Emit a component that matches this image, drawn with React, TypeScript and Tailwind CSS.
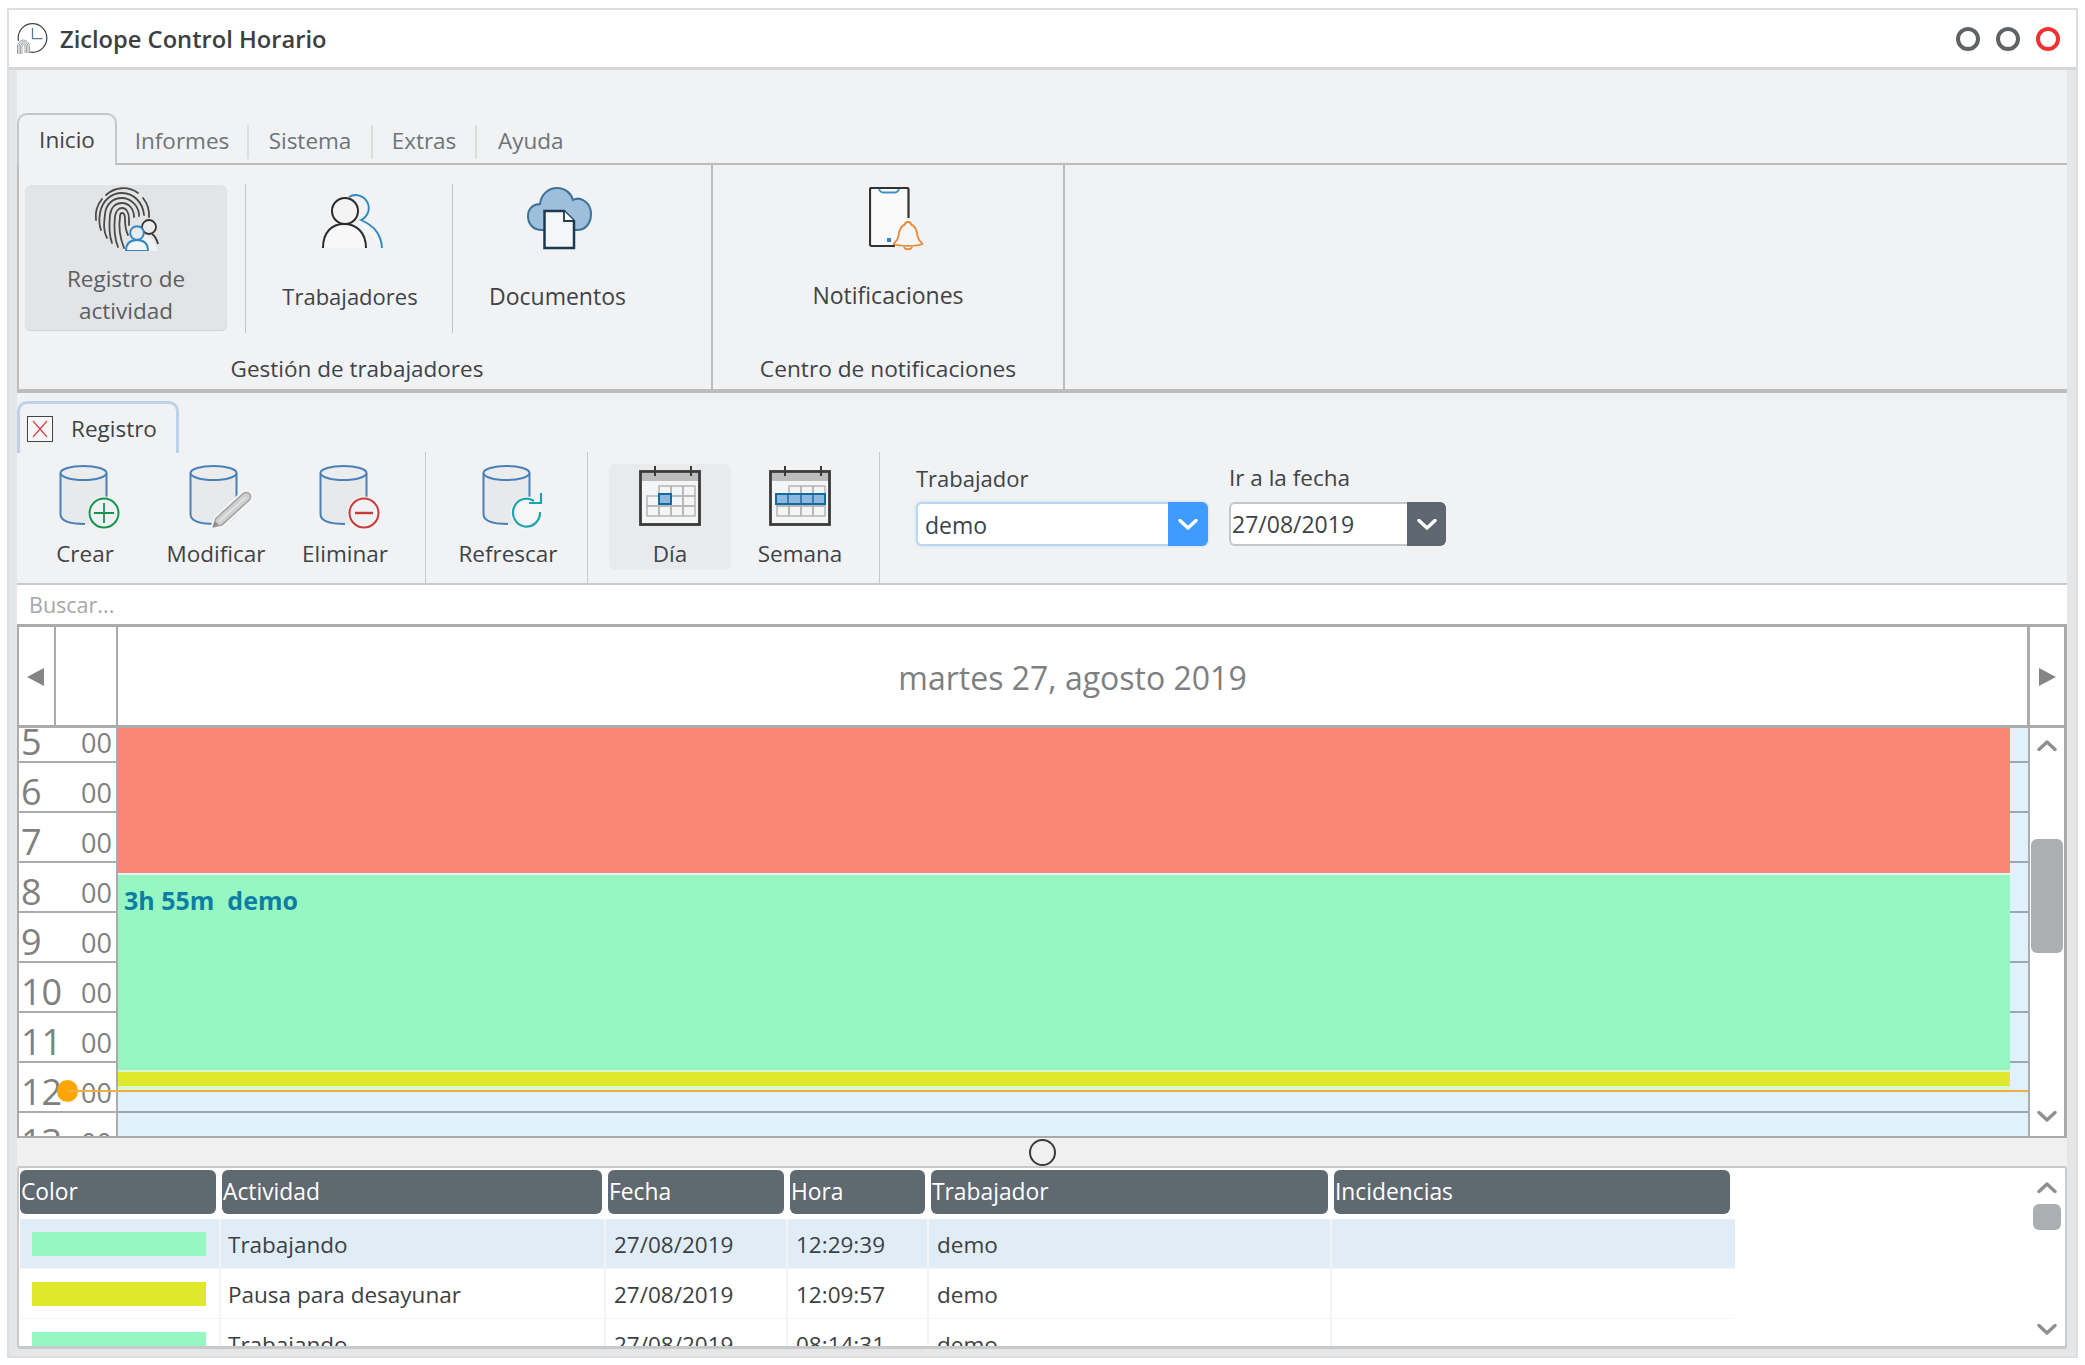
import React from "react";

const Chev = ({ up = false, color = "#8d8f91", w = 20, h = 11, sw = 3.4 }: { up?: boolean; color?: string; w?: number; h?: number; sw?: number }) => (
  <svg width={w} height={h} viewBox="0 0 20 11" className="block">
    <path d={up ? "M2 9.5 L10 2 L18 9.5" : "M2 1.5 L10 9 L18 1.5"} fill="none" stroke={color} strokeWidth={sw} strokeLinecap="round" strokeLinejoin="round" />
  </svg>
);

const Logo = () => (
  <svg width="32" height="32" viewBox="0 0 32 32" className="block">
    <circle cx="15.500" cy="15" r="14.300" fill="none" stroke="#3a4146" strokeWidth="1.200" />
    <path d="M15.500 5 V15.700 H25.500" fill="none" stroke="#55789a" strokeWidth="1.300" />
    <circle cx="6.500" cy="24" r="8" fill="#ffffff" />
    {[1.500, 3, 4.500, 6].map((r) => (
      <path key={r} d={`M${6.5 - r} 31 V${24} A${r} ${r + 1} 0 0 1 ${6.5 + r} 24 V30`} fill="none" stroke="#8a8f92" strokeWidth="0.800" />
    ))}
  </svg>
);

const fpPaths = [
  "M3 33 A26 27 0 0 1 9 12",
  "M13 8 A26 27 0 0 1 45 6",
  "M50 11 A26 27 0 0 1 56 30",
  "M8 43 C6 38 6 32 7 26 C9 14 18 6 29 6 C41 6 50 16 51 28",
  "M14 51 C10 44 11 36 12 27 C13 17 20 11 29 11 C37 11 45 18 46 27 L46 29",
  "M19 56 C16 48 16 38 17 28 C18 20 23 16 29 16 C36 16 41 22 41 30",
  "M25 60 C21 50 21 38 22 29 C23 24 26 21 29 21 C33 21 36 25 36 32 L36 38",
  "M31 61 C26 48 26 36 27 30 C27 27 28 26 29 26 C31 26 32 28 32 32 C32 38 33 44 35 48",
];

const Fingerprint = () => (
  <svg width="66" height="64" viewBox="0 0 66 64" className="block">
    {fpPaths.map((d) => (
      <path key={d} d={d} fill="none" stroke="#4a4a4a" strokeWidth="1.800" strokeLinecap="round" />
    ))}
    <path d="M44 50 C52 46 60 48 65 64 L38 64 Z" fill="#f1f2f3" />
    <circle cx="56" cy="40" r="7" fill="#ececed" stroke="#333" strokeWidth="1.800" />
    <path d="M59 47 C62 49 64 53 65 57" fill="none" stroke="#333" strokeWidth="1.800" />
    <path d="M33 64 C33 56 37 53 44 53 C51 53 55 56 55 64 Z" fill="#f4f5f6" stroke="#2e88c4" strokeWidth="1.900" />
    <circle cx="44" cy="46" r="6.800" fill="#e8ecef" stroke="#2e88c4" strokeWidth="1.900" />
  </svg>
);

const People = () => (
  <svg width="61" height="61" viewBox="0 0 61 61" className="block">
    <path d="M36 33 C47 37 56 44 59.500 58" fill="#f6f6f6" stroke="none" />
    <path d="M27 9 A13 13 0 1 1 39 32 C50 37 59 44 60 60" fill="none" stroke="#2e88c4" strokeWidth="1.900" />
    <path d="M1 60 C1 44 10 36 22 36 C34 36 44 44 44 60" fill="#f8f8f8" stroke="#2b2b2b" strokeWidth="2" />
    <circle cx="23" cy="23" r="13" fill="#f3f3f3" stroke="#2b2b2b" strokeWidth="2" />
  </svg>
);

const CloudDoc = () => (
  <svg width="65" height="63" viewBox="0 0 65 63" className="block">
    <path d="M15 43 C6 43 1 37 1 29 C1 21 7 17 13 17 C14 7 22 1 30 1 C38 1 44 6 46 13 C53 9 64 15 64 27 C64 37 58 43 50 43 Z" fill="#9dbfdc" stroke="#3d7099" strokeWidth="2" />
    <path d="M17.500 24 H37 L47 34 V61 H17.500 Z" fill="#f4f6f8" stroke="#1c3a52" strokeWidth="2.500" />
    <path d="M37 24 V34 H47" fill="#ffffff" stroke="#1c3a52" strokeWidth="1.800" />
  </svg>
);

const PhoneBell = () => (
  <svg width="55" height="64" viewBox="0 0 55 64" className="block">
    <path d="M26 59 H2.500 A1.500 1.500 0 0 1 1 57.500 V2.500 A1.500 1.500 0 0 1 2.500 1 H38 A1.500 1.500 0 0 1 39.500 2.500 V31" fill="#fafafa" stroke="#333" strokeWidth="2.200" />
    <path d="M10 2 C11 5 12 5.500 14 5.500 H26 C28 5.500 29 5 30 2" fill="none" stroke="#3d8fc6" strokeWidth="1.800" />
    <rect x="18" y="51" width="4" height="4" fill="#2e88c4" />
    <path d="M39 35 C41 35 42 36 42 37.500 C47 39 48 44 48.500 49 C49 53 51.500 55 53.500 57 C49 59.500 29 59.500 24.500 57 C26.500 55 29 53 29.500 49 C30 44 31 39 36 37.500 C36 36 37 35 39 35 Z" fill="#f6f6f6" stroke="#e98a3a" strokeWidth="1.900" strokeLinejoin="round" />
    <path d="M35 60 C36 63 42 63 43 60" fill="none" stroke="#e98a3a" strokeWidth="1.800" />
  </svg>
);

const Cylinder = ({ children }: { children?: React.ReactNode }) => (
  <svg width="61" height="65" viewBox="0 0 61 65" className="block overflow-visible">
    <path d="M1.500 9 V52 C1.500 58 9 60 24 60 C36 60 47 58 47.500 52 V9 Z" fill="#e8e9ea" />
    <path d="M1.500 9 V50 C1.500 57 10 60 26 60 M47.500 9 V36" fill="none" stroke="#4a80b8" strokeWidth="2" />
    <ellipse cx="24.500" cy="9" rx="23" ry="7" fill="#ebecee" stroke="#4a80b8" strokeWidth="2" />
    {children}
  </svg>
);

const Plus = () => (
  <g>
    <circle cx="45" cy="49" r="16.500" fill="#f6f6f6" />
    <circle cx="45" cy="49" r="14.500" fill="#f0f1f2" stroke="#16954f" strokeWidth="2" />
    <path d="M45 39 V59 M35 49 H55" stroke="#16954f" strokeWidth="1.800" />
  </g>
);
const Pencil = () => (
  <g>
    <path d="M24 63 L27 54.300 L54 29.700 C56 28 59 28 60.500 30 C62 32 62 34 60 36.300 L33 60.900 Z" fill="#f1f2f3" stroke="#f6f6f6" strokeWidth="5" strokeLinejoin="round" />
    <path d="M24 63 L27 54.300 L54 29.700 C56 28 59 28 60.500 30 C62 32 62 34 60 36.300 L33 60.900 Z" fill="#cfcfcf" stroke="#a2a2a2" strokeWidth="1.500" strokeLinejoin="round" />
    <path d="M30 57.500 L57 33" stroke="#e4e4e4" strokeWidth="1.600" />
    <path d="M24 63 L26 57.500 L29.500 60.500 Z" fill="#8a8a8a" />
  </g>
);
const Minus = () => (
  <g>
    <circle cx="45" cy="49" r="16.500" fill="#f8f8f8" />
    <circle cx="45" cy="49" r="14.500" fill="#f1f2f3" stroke="#c93a3a" strokeWidth="2" />
    <path d="M36 49 H54" stroke="#c93a3a" strokeWidth="2.400" />
  </g>
);
const Refresh = () => (
  <g>
    <circle cx="45" cy="49" r="16.500" fill="#f6f6f6" />
    <path d="M58 48 A13.500 14 0 1 1 52 37" fill="none" stroke="#1fa5b2" strokeWidth="2.200" />
    <path d="M59 29 V39 H47" fill="none" stroke="#1fa5b2" strokeWidth="2.200" />
  </g>
);

const CalendarIcon = ({ week = false }: { week?: boolean }) => {
  const xs = [8, 20, 32, 44];
  const ys = [20, 30, 40];
  return (
    <svg width="62" height="60" viewBox="0 0 62 60" className="block">
      <rect x="1.500" y="5.500" width="59" height="53" fill="#f4f5f6" stroke="#3a3a3a" strokeWidth="2.800" />
      <rect x="3" y="7" width="56" height="8" fill="#bcbcbc" />
      <path d="M16 0 V10 M52 0 V10" stroke="#3a3a3a" strokeWidth="2" />
      {ys.map((y) =>
        xs.map((x) =>
          y === 20 && x === 8 ? null : (
            <rect key={x + "-" + y} x={x} y={y} width="12" height="10" fill="none" stroke="#b5b5b5" strokeWidth="1.500" />
          )
        )
      )}
      {week ? (
        <g>
          <rect x="7" y="28" width="49" height="10" fill="#8db9de" stroke="#146a9e" strokeWidth="2" />
          <path d="M19 28 V38 M32 28 V38 M44 28 V38" stroke="#146a9e" strokeWidth="1.400" />
        </g>
      ) : (
        <rect x="20" y="28" width="12" height="10" fill="#8db9de" stroke="#146a9e" strokeWidth="2" />
      )}
    </svg>
  );
};

const ToolBtn = ({ icon, label, className }: { icon: React.ReactNode; label: string; className: string }) => (
  <div className={`flex flex-col items-center pt-[12px] h-full ${className}`}>
    <div className="h-[75px] flex justify-center">{icon}</div>
    <div className="text-[22.500px] leading-[30px] text-[#3f4346]">{label}</div>
  </div>
);

const Tab = ({ label, className }: { label: string; className: string }) => (
  <div className={`h-[34px] mb-[4px] flex items-center justify-center pb-[3px] border-r-2 border-[#dcdddd] text-[22.500px] text-[#6f7477] ${className}`}>
    {label}
  </div>
);

const hours = [5, 6, 7, 8, 9, 10, 11, 12, 13];

const headerCols = [
  ["Color", "w-[196px]"],
  ["Actividad", "w-[380px]"],
  ["Fecha", "w-[176px]"],
  ["Hora", "w-[135px]"],
  ["Trabajador", "w-[397px]"],
  ["Incidencias", "w-[396px]"],
];

const rows = [
  { c: "bg-[#96f7c3]", a: "Trabajando", f: "27/08/2019", h: "12:29:39", t: "demo", bg: "bg-[#e1edf6]" },
  { c: "bg-[#e0e82e]", a: "Pausa para desayunar", f: "27/08/2019", h: "12:09:57", t: "demo", bg: "bg-white" },
  { c: "bg-[#96f7c3]", a: "Trabajando", f: "27/08/2019", h: "08:14:31", t: "demo", bg: "bg-white" },
];

export default function App() {
  return (
    <div className="w-[2085px] h-[1365px] bg-white pt-[8px] pl-[7px] overflow-hidden font-['Open_Sans','Noto_Sans',sans-serif]">
      <div className="w-[2071px] h-[1350px] flex flex-col border-2 border-[#dcdedf] bg-[#e4e6e8]">
        {/* title bar */}
        <div className="h-[60px] shrink-0 bg-white border-b-[3px] border-[#d5d7d8] flex items-center pl-[8px] pr-[16px]">
          <Logo />
          <div className="ml-[11px] pt-[2px] text-[23.700px] font-semibold text-[#3c4043]">Ziclope Control Horario</div>
          <div className="ml-auto flex gap-[16px]">
            <div className="w-[24px] h-[24px] rounded-full border-[4px] border-[#5f6366]" />
            <div className="w-[24px] h-[24px] rounded-full border-[4px] border-[#5f6366]" />
            <div className="w-[24px] h-[24px] rounded-full border-[4px] border-[#f03232]" />
          </div>
        </div>

        <div className="flex-1 min-h-0 pl-[8px] pr-[9px] pb-[9px] flex">
          <div className="flex-1 min-w-0 bg-[#f1f2f3] flex flex-col">
            {/* menu tabs */}
            <div className="h-[95px] shrink-0 flex items-end border-b-2 border-[#bcbcbc]">
              <div className="w-[100px] h-[52px] -mb-[2px] bg-[#f1f2f3] rounded-t-[10px] border-2 border-b-0 border-[#c5c6c7] flex items-center justify-center text-[22.500px] text-[#3f4346] pb-[1px]">Inicio</div>
              <Tab label="Informes" className="w-[132px]" />
              <Tab label="Sistema" className="w-[124px]" />
              <Tab label="Extras" className="w-[104px]" />
              <div className="h-[34px] mb-[4px] pb-[3px] flex items-center pl-[21px] text-[22.500px] text-[#6f7477]">Ayuda</div>
            </div>

            {/* ribbon */}
            <div className="h-[228px] shrink-0 flex border-l-2 border-b-[4px] border-[#bcbcbc]">
              <div className="w-[694px] border-r-2 border-[#bcbcbc] flex flex-col">
                <div className="h-[186px] flex pt-[20px] pl-[6px]">
                  <div className="w-[202px] h-[145px] bg-[#e3e4e5] rounded-[6px] shadow-[0_1px_1px_#cfd0d1] flex flex-col items-center">
                    <div className="h-[66px] pt-[2px]"><Fingerprint /></div>
                    <div className="text-[22.500px] leading-[32px] text-[#5a5f63] text-center pt-[12px]">Registro de<br />actividad</div>
                  </div>
                  <div className="ml-[18px] w-[208px] h-[149px] -mt-[1px] border-l border-r border-[#c3c4c5] flex flex-col items-center">
                    <div className="pt-[4px] h-[96px] pl-[6px]"><People /></div>
                    <div className="pl-[2px] text-[22px] leading-[32px] text-[#3f4346]">Trabajadores</div>
                  </div>
                  <div className="w-[209px] h-[149px] -mt-[1px] flex flex-col items-center">
                    <div className="pt-[3px] h-[96px] pl-[4px]"><CloudDoc /></div>
                    <div className="text-[23px] leading-[32px] text-[#3f4346]">Documentos</div>
                  </div>
                </div>
                <div className="h-[38px] pr-[16px] text-center text-[22.500px] leading-[36px] text-[#3f4346]">Gestión de trabajadores</div>
              </div>
              <div className="w-[352px] border-r-2 border-[#bcbcbc] flex flex-col">
                <div className="h-[186px] flex flex-col items-center pt-[22px]">
                  <div className="h-[92px] pl-[16px]"><PhoneBell /></div>
                  <div className="text-[23px] leading-[32px] text-[#3f4346]">Notificaciones</div>
                </div>
                <div className="h-[38px] text-center text-[22.700px] leading-[36px] text-[#3f4346]">Centro de notificaciones</div>
              </div>
            </div>

            {/* document tab */}
            <div className="h-[59px] shrink-0 pt-[7px] flex items-end">
              <div className="w-[162px] h-[52px] bg-[#f1f2f3] rounded-t-[10px] border-[3px] border-b-0 border-[#bcd2ea] flex items-center pl-[7px] -mb-[1px]">
                <div className="w-[26px] h-[26px] border border-[#444] bg-[#f7f7f7] flex items-center justify-center">
                  <svg width="20" height="20" viewBox="0 0 20 20" className="block"><path d="M3 2 L17 18 M17 2 L3 18" stroke="#d4414f" strokeWidth="1.200" /></svg>
                </div>
                <div className="ml-[18px] pt-[1px] text-[22.500px] text-[#3f4346]">Registro</div>
              </div>
            </div>

            {/* toolbar */}
            <div className="h-[131px] shrink-0 flex">
              <div className="w-[409px] flex border-r border-[#c8c9ca]">
                <ToolBtn className="w-[136px]" icon={<div className="pl-[8px]"><Cylinder><Plus /></Cylinder></div>} label="Crear" />
                <ToolBtn className="w-[126px]" icon={<div className="pl-[6px]"><Cylinder><Pencil /></Cylinder></div>} label="Modificar" />
                <ToolBtn className="w-[132px]" icon={<div className="pl-[8px]"><Cylinder><Minus /></Cylinder></div>} label="Eliminar" />
              </div>
              <div className="w-[162px] flex justify-center border-r border-[#c8c9ca]">
                <ToolBtn className="w-[140px] ml-[3px]" icon={<div className="pl-[8px]"><Cylinder><Refresh /></Cylinder></div>} label="Refrescar" />
              </div>
              <div className="w-[292px] flex pl-[21px] border-r border-[#c8c9ca]">
                <div className="w-[122px] h-[106px] mt-[12px] rounded-[6px] bg-[#e9eaeb] flex flex-col items-center pt-[2px]">
                  <div className="h-[73px]"><CalendarIcon /></div>
                  <div className="text-[22.500px] leading-[30px] text-[#3f4346]">Día</div>
                </div>
                <div className="w-[138px] flex flex-col items-center pt-[14px]">
                  <div className="h-[73px]"><CalendarIcon week /></div>
                  <div className="text-[22.500px] leading-[30px] text-[#3f4346]">Semana</div>
                </div>
              </div>
              <div className="pl-[36px] flex gap-[21px] pt-[9px]">
                <div className="flex flex-col w-[292px]">
                  <div className="h-[41px] text-[22px] leading-[34px] text-[#3f4346]">Trabajador</div>
                  <div className="h-[44px] flex rounded-[6px] border-[2px] border-r-0 border-[#b8d6f6] shadow-[0_0_3px_#b8d6f6] bg-white">
                    <div className="flex-1 pl-[7px] text-[23px] leading-[42px] text-[#3f4346] rounded-l-[6px]">demo</div>
                    <div className="w-[40px] -my-[2px] bg-[#3f9bff] rounded-r-[6px] flex items-center justify-center"><Chev color="#ffffff" /></div>
                  </div>
                </div>
                <div className="flex flex-col w-[217px]">
                  <div className="h-[41px] text-[22.500px] leading-[34px] text-[#3f4346]">Ir a la fecha</div>
                  <div className="h-[44px] flex rounded-[6px] border-[2px] border-r-0 border-[#c5c6c7] bg-white">
                    <div className="flex-1 pl-[1px] text-[23px] leading-[40px] text-[#3f4346] rounded-l-[6px]">27/08/2019</div>
                    <div className="w-[39px] -my-[2px] bg-[#5e6770] rounded-r-[6px] flex items-center justify-center"><Chev color="#ffffff" /></div>
                  </div>
                </div>
              </div>
            </div>

            {/* search */}
            <div className="h-[44px] shrink-0 bg-white border-t-2 border-b-[3px] border-t-[#c8c9ca] border-b-[#ababab] pl-[12px] text-[21.500px] leading-[39px] text-[#a6a8aa]">Buscar...</div>

            {/* calendar header */}
            <div className="h-[101px] shrink-0 flex bg-white border-l-2 border-r-[3px] border-b-[3px] border-[#ababab]">
              <div className="w-[37px] border-r-2 border-[#ababab] flex items-center justify-center pr-[2px] pt-[1px]">
                <svg width="18" height="18" viewBox="0 0 18 18" className="block"><path d="M17 0 V18 L0 9 Z" fill="#858585" /></svg>
              </div>
              <div className="w-[62px] border-r-2 border-[#ababab]" />
              <div className="flex-1 flex items-center justify-center text-[32px] text-[#7d7f81] pt-[3px]">martes 27, agosto 2019</div>
              <div className="w-[37px] border-l-[3px] border-[#ababab] flex items-center justify-center pt-[1px]">
                <svg width="18" height="18" viewBox="0 0 18 18" className="block"><path d="M1 0 V18 L18 9 Z" fill="#858585" /></svg>
              </div>
            </div>

            {/* calendar body */}
            <div className="relative h-[410px] shrink-0 flex overflow-hidden bg-white border-l-2 border-r-[3px] border-b-2 border-[#ababab]">
              <div className="w-[99px] shrink-0 border-r-2 border-[#ababab] overflow-hidden">
                <div className="-mt-[15px]">
                  {hours.map((h) => (
                    <div key={h} className="h-[50px] border-b-2 border-[#ababab] flex items-center justify-between pl-[2px] pr-[4px] pt-[10px] text-[#808080]">
                      <span className="text-[36px] leading-none">{h}</span>
                      <span className="text-[27px] leading-none">00</span>
                    </div>
                  ))}
                </div>
              </div>
              <div className="relative flex-1 min-w-0 bg-[#e0f1fc] overflow-hidden">
                <div className="-mt-[15px]">
                  {hours.map((h) => (
                    <div key={h} className="h-[50px] border-b-2 border-[#9aa8b4]" />
                  ))}
                </div>
                <div className="absolute left-0 right-[18px] top-0 h-[145px] bg-[#f98775]" />
                <div className="absolute left-0 right-[18px] top-[147px] h-[195px] bg-[#96f7c3] pl-[6px] pt-[9px] text-[25px] leading-[32px] font-bold text-[#0f7da3] whitespace-pre">3h 55m  demo</div>
                <div className="absolute left-0 right-[18px] top-[342px] h-[20px] bg-[#d9f7c8]" />
                <div className="absolute left-0 right-[18px] top-[344px] h-[14px] bg-[#e0e82e]" />
                <div className="absolute left-0 right-0 top-[362px] h-[2px] bg-[#eeb044]" />
              </div>
              <div className="w-[36px] shrink-0 border-l-2 border-[#ababab] flex flex-col items-center">
                <div className="mt-[12px]"><Chev up /></div>
                <div className="mt-[88px] w-[32px] h-[114px] rounded-[6px] bg-[#acafb1]" />
                <div className="mt-[158px]"><Chev /></div>
              </div>
              <div className="absolute left-[38px] top-[352px] w-[21px] h-[22px] rounded-full bg-[#ffa500]" />
              <div className="absolute left-[49px] top-[362px] w-[50px] h-[2px] bg-[#eeb044]" />
            </div>

            {/* splitter */}
            <div className="h-[28px] shrink-0 flex items-center justify-center bg-[#f0f0f0]">
              <div className="w-[27px] h-[27px] rounded-full border-2 border-[#3a3a3a]" />
            </div>

            {/* grid */}
            <div className="h-[183px] shrink-0 flex bg-white border-t-2 border-b-[3px] border-x-2 border-[#c8c9ca] rounded-[3px]">
              <div className="flex-1 min-w-0 overflow-hidden pl-[1px] pt-[2px]">
                <div className="flex gap-[6px] h-[44px]">
                  {headerCols.map(([n, w]) => (
                    <div key={n} className={`${w} shrink-0 rounded-[6px] bg-[#5f6970] text-white text-[22.800px] leading-[44px] pl-[1px]`}>{n}</div>
                  ))}
                </div>
                <div className="mt-[5px] w-[1715px]">
                  {rows.map((r, i) => (
                    <div key={i} className={`flex h-[50px] border-b border-[#f3f4f5] text-[22.500px] leading-[52px] text-[#3c4043] ${r.bg}`}>
                      <div className="w-[201px] border-r-2 border-[#f2f4f6] pl-[12px] pr-[13px] pt-[13px]">
                        <div className={`h-[24px] ${r.c}`} />
                      </div>
                      <div className="w-[385px] border-r-2 border-[#f2f4f6] pl-[7px]">{r.a}</div>
                      <div className="w-[182px] border-r-2 border-[#f2f4f6] pl-[8px]">{r.f}</div>
                      <div className="w-[141px] border-r-2 border-[#f2f4f6] pl-[8px]">{r.h}</div>
                      <div className="w-[403px] border-r-2 border-[#f2f4f6] pl-[8px]">{r.t}</div>
                      <div className="w-[403px]" />
                    </div>
                  ))}
                </div>
              </div>
              <div className="w-[36px] shrink-0 flex flex-col items-center">
                <div className="mt-[14px]"><Chev up /></div>
                <div className="mt-[11px] w-[28px] h-[26px] rounded-[6px] bg-[#acafb1]" />
                <div className="mt-[94px]"><Chev /></div>
              </div>
            </div>
          </div>
        </div>
      </div>
    </div>
  );
}
